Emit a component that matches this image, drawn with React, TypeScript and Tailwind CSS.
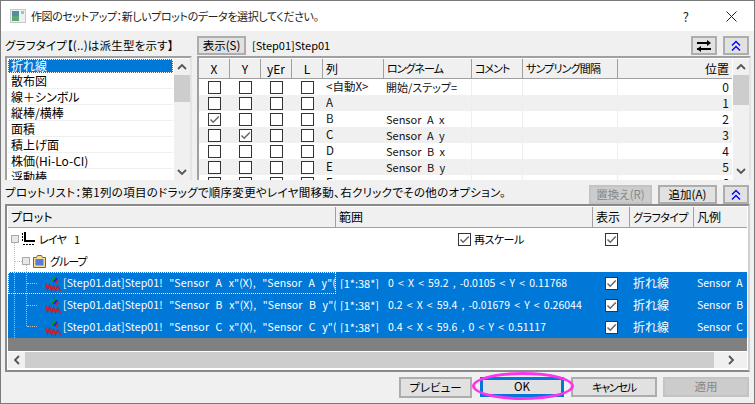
import React from "react";

const FONT = "[font-family:'Noto_Sans_CJK_JP','Noto_Sans',sans-serif] [font-feature-settings:'palt']";

function Chevron({ dir, className = "" }: { dir: "up" | "down" | "left" | "right"; className?: string }) {
  const rot = { up: 0, down: 180, left: 270, right: 90 }[dir];
  return (
    <svg width="10" height="8" viewBox="0 0 10 8" className={className} style={{ transform: `rotate(${rot}deg)` }}>
      <path d="M1 6 L5 2 L9 6" fill="none" stroke="#555" strokeWidth="1.8" />
    </svg>
  );
}

function DoubleUp() {
  return (
    <svg width="10" height="12" viewBox="0 0 10 12">
      <path d="M1 5.5 L5 1.5 L9 5.5 M1 10.5 L5 6.5 L9 10.5" fill="none" stroke="#0000ff" strokeWidth="1.4" />
    </svg>
  );
}

function Check() {
  return (
    <svg width="11" height="11" viewBox="0 0 11 11">
      <path d="M1.5 5.5 L4.2 8.2 L9.8 2.5" fill="none" stroke="#666" strokeWidth="1.5" />
    </svg>
  );
}

function Box({ checked = false }: { checked?: boolean }) {
  return (
    <div className="w-[13px] h-[13px] bg-white border border-[#333] flex items-center justify-center shrink-0">
      {checked && <Check />}
    </div>
  );
}

function Expander() {
  return <div className="w-[8px] h-[8px] border border-[#aaa] bg-[#e8e8e8] shrink-0" />;
}

function LayerIcon() {
  return (
    <svg width="14" height="14" viewBox="0 0 14 14" className="shrink-0">
      <path d="M0.5 1v8" stroke="#000" strokeWidth="1" strokeDasharray="2 1" />
      <path d="M3 0 V9 H13" fill="none" stroke="#000" strokeWidth="2" />
      <path d="M1 12.5 H13" stroke="#000" strokeWidth="1" strokeDasharray="2 1" />
    </svg>
  );
}

function GroupIcon() {
  return (
    <svg width="13" height="13" viewBox="0 0 13 13" className="shrink-0">
      <path d="M0.5 2.5 H3.5 L4.5 0.5 H8.5 L9.5 2.5 H12.5 V12.5 H0.5 Z" fill="#f4e08a" stroke="#666" />
      <rect x="2.5" y="4" width="8" height="6.5" fill="#5a78e0" />
      <path d="M2.5 4.5h8M2.5 6.5h8M2.5 8.5h8" stroke="#f05050" strokeWidth="1" strokeDasharray="1 1" />
    </svg>
  );
}

function PlotIcon() {
  return (
    <svg width="16" height="17" viewBox="0 0 16 17" className="shrink-0">
      <path d="M0.5 8 L2.5 15 L4.5 9 L6.5 16 L8.5 10 L10.5 16 L12.5 11 L15.5 16" fill="none" stroke="#e01010" strokeWidth="1.1" />
      <path d="M7 6 L10 2" stroke="#00a000" strokeWidth="2" />
      <path d="M9 7 L12 3" stroke="#2020e0" strokeWidth="2" />
      <path d="M11 8 L13 5" stroke="#d02020" strokeWidth="2" />
    </svg>
  );
}

function Btn({ children, className = "" }: { children: React.ReactNode; className?: string }) {
  return (
    <div className={`flex items-center justify-center border-2 border-[#adadad] bg-[#e1e1e1] text-[11.5px] leading-none whitespace-nowrap ${className}`}>
      {children}
    </div>
  );
}

function ScrollV({ thumb }: { thumb: string }) {
  return (
    <div className="w-[16px] h-full bg-[#f0f0f0] flex flex-col items-center shrink-0">
      <div className="h-[16px] flex items-center justify-center shrink-0"><Chevron dir="up" /></div>
      <div className={`w-full bg-[#cdcdcd] shrink-0 ${thumb}`} />
      <div className="flex-1" />
      <div className="h-[18px] flex items-center justify-center shrink-0"><Chevron dir="down" /></div>
    </div>
  );
}

const types = ["折れ線", "散布図", "線＋シンボル", "縦棒/横棒", "面積", "積上げ面", "株価(Hi-Lo-CI)", "浮動棒"];

const rows = [
  { col: "<自動X>", name: "開始/ステップ=", pos: "0" },
  { col: "A", name: "", pos: "1" },
  { col: "B", name: "Sensor A x", pos: "2", x: true },
  { col: "C", name: "Sensor A y", pos: "3", y: true },
  { col: "D", name: "Sensor B x", pos: "4" },
  { col: "E", name: "Sensor B y", pos: "5" },
  { col: "F", name: "Sensor C x", pos: "6" },
];

const GRID = "grid grid-cols-[31px_31px_31px_31px_61px_88px_51px_95px_114px]";
const PLOT = "grid grid-cols-[328px_257px_37px_64px_53px]";

const headers = [
  { t: "X", c: "justify-center" },
  { t: "Y", c: "justify-center" },
  { t: "yEr", c: "justify-center" },
  { t: "L", c: "justify-center" },
  { t: "列", c: "pl-[3px]" },
  { t: "ロングネーム", c: "pl-[3px] text-[11px] tracking-[-1px]" },
  { t: "コメント", c: "pl-[3px] text-[11px] tracking-[-1px]" },
  { t: "サンプリング間隔", c: "pl-[3px] text-[11px] tracking-[-0.8px]" },
  { t: "位置", c: "justify-end pr-[3px] border-r-0" },
];

const plotHeaders = [
  { t: "プロット", c: "" },
  { t: "範囲", c: "" },
  { t: "表示", c: "" },
  { t: "グラフタイプ", c: "text-[11px] tracking-[-0.5px]" },
  { t: "凡例", c: "border-r-0" },
];

const plots = [
  { src: `[Step01.dat]Step01! "Sensor A x"(X), "Sensor A y"(Y),`, range: "0 < X < 59.2 , -0.0105 < Y < 0.11768", legend: "Sensor A", focus: true },
  { src: `[Step01.dat]Step01! "Sensor B x"(X), "Sensor B y"(Y),`, range: "0.2 < X < 59.4 , -0.01679 < Y < 0.26044", legend: "Sensor B" },
  { src: `[Step01.dat]Step01! "Sensor C x"(X), "Sensor C y"(Y),`, range: "0.4 < X < 59.6 , 0 < Y < 0.51117", legend: "Sensor C" },
];

export default function App() {
  return (
    <div className={`w-[755px] h-[404px] border border-[#7a7a7a] bg-[#f0f0f0] text-[12px] leading-none text-black flex flex-col overflow-hidden ${FONT}`}>
      {/* title bar */}
      <div className="h-[30px] bg-white flex items-center shrink-0">
        <svg width="16" height="14" viewBox="0 0 16 14" className="ml-[9px] shrink-0">
          <rect x="0.5" y="0.5" width="15" height="13" fill="#eef0ee" stroke="#c8c8c8" />
          <rect x="2" y="2" width="7" height="10" fill="#4f8f9f" />
          <rect x="2" y="7" width="7" height="5" fill="#5aa878" />
          <rect x="11" y="2" width="3" height="3" fill="#9fc4c0" />
        </svg>
        <span className="ml-[5px] text-[#222] text-[11px] tracking-[-0.4px] whitespace-nowrap">作図のセットアップ：新しいプロットのデータを選択してください。</span>
        <span className="ml-auto text-[13px] text-[#222]">?</span>
        <svg width="11" height="11" viewBox="0 0 11 11" className="ml-[37px] mr-[17px] shrink-0">
          <path d="M0.5 0.5 L10.5 10.5 M10.5 0.5 L0.5 10.5" stroke="#222" strokeWidth="1" />
        </svg>
      </div>

      {/* toolbar */}
      <div className="h-[25px] shrink-0 flex items-start pt-[5px] pl-[4px] pr-[5px]">
        <div className="w-[192px] pt-[1px] text-[11.5px] tracking-[0.2px] leading-[16px] whitespace-nowrap">グラフタイプ【(..)は派生型を示す】</div>
        <Btn className="w-[49px] h-[19px]">表示(S)</Btn>
        <span className="ml-[6px] leading-[18px] text-[11px]">[Step01]Step01</span>
        <Btn className="ml-auto w-[26px] h-[19px]">
          <svg width="16" height="14" viewBox="0 0 16 14">
            <path d="M1 4 H11 M1 10 H15" stroke="#000" strokeWidth="2" fill="none" />
            <path d="M11 1 L15 4 L11 7 Z M5 7 L1 10 L5 13 Z" fill="#000" />
          </svg>
        </Btn>
        <Btn className="ml-[6px] w-[26px] h-[19px]"><DoubleUp /></Btn>
      </div>

      {/* upper panels */}
      <div className="h-[124px] shrink-0 flex pl-[4px] pr-[3px] gap-[5px]">
        <div className="w-[187px] h-full border-2 border-b-0 border-[#a0a0a0] border-r-[#e4e4e4] bg-white flex pt-[1px] pl-[1px]">
          <div className="flex-1 overflow-hidden">
            {types.map((t, i) => (
              <div
                key={t}
                className={`flex items-center pl-[3px] text-[12px] whitespace-nowrap ${i === 0 ? "h-[14px] bg-[#0078d7] text-white outline-1 outline-dotted outline-white -outline-offset-1" : "h-[16px] border-b border-[#f0f0f0]"}`}
              >
                {t}
              </div>
            ))}
          </div>
          <div className="ml-[1px] h-[122px]"><ScrollV thumb="h-[27px]" /></div>
        </div>

        <div className="flex-1 h-full border-2 border-b-0 border-[#a0a0a0] border-r-[#e4e4e4] bg-white flex overflow-hidden">
          <div className="w-[533px] overflow-hidden pt-[1px]">
            <div className={`${GRID} h-[20px] bg-[#f0f0f0] border-b border-[#a0a0a0]`}>
              {headers.map((h) => (
                <div key={h.t} className={`flex items-center border-r border-[#a0a0a0] whitespace-nowrap overflow-hidden ${h.c}`}>
                  {h.t}
                </div>
              ))}
            </div>
            {rows.map((r, i) => (
              <div key={r.col} className={`${GRID} h-[16px] ${i % 2 ? "bg-[#f0f0f0]" : "bg-white"}`}>
                {[r.x, r.y, false, false].map((c, j) => (
                  <div key={j} className="flex items-center justify-center"><Box checked={!!c} /></div>
                ))}
                <div className="flex items-center pl-[3px] text-[#111] text-[11.5px] whitespace-nowrap">{r.col}</div>
                <div className="flex items-center pl-[2px] text-[#111] text-[11px] [word-spacing:3px] whitespace-nowrap border-r border-[#eeeeee]">{r.name}</div>
                <div className="border-r border-[#eeeeee]" />
                <div className="border-r border-[#eeeeee]" />
                <div className="flex items-center justify-end pr-[3px] text-[#111]">{r.pos}</div>
              </div>
            ))}
          </div>
          <div className="ml-[1px] h-[122px] pt-[1px]"><ScrollV thumb="h-[30px]" /></div>
        </div>
      </div>

      {/* status row */}
      <div className="h-[24px] shrink-0 flex items-start pl-[4px] pr-[5px] pt-[5px]">
        <span className="text-[11.5px] tracking-[0.3px] leading-[14px] whitespace-nowrap">プロットリスト：第1列の項目のドラッグで順序変更やレイヤ間移動、右クリックでその他のオプション。</span>
        <Btn className="ml-auto w-[63px] h-[19px] !bg-[#cccccc] !border-[#c4c4c4] text-[#888] shrink-0">置換え(R)</Btn>
        <Btn className="ml-[6px] w-[59px] h-[19px] shrink-0">追加(A)</Btn>
        <Btn className="ml-[6px] w-[26px] h-[19px] shrink-0"><DoubleUp /></Btn>
      </div>

      {/* plot list */}
      <div className="mx-[4px] h-[168px] shrink-0 border-2 border-[#8a8a8a] border-r-[#d0d0d0] border-b-[#8a8a8a] bg-white p-[1px] flex flex-col">
        <div className={`${PLOT} h-[21px] bg-[#f0f0f0] border-b border-[#a0a0a0] shrink-0`}>
          {plotHeaders.map((h) => (
            <div key={h.t} className={`flex items-center pl-[3px] whitespace-nowrap overflow-hidden border-r border-[#a0a0a0] ${h.c}`}>{h.t}</div>
          ))}
        </div>

        <div className="relative flex-1 flex flex-col min-h-0">
          <div className={`${PLOT} h-[22px] shrink-0`}>
            <div className="flex items-center pl-[3px] gap-[3px]">
              <Expander />
              <LayerIcon />
              <span className="text-[11px] tracking-[-0.7px] [word-spacing:6px]">レイヤ 1</span>
            </div>
            <div className="flex items-center pl-[122px] gap-[3px]">
              <Box checked />
              <span className="text-[11px] tracking-[-0.5px]">再スケール</span>
            </div>
            <div className="flex items-center pl-[12px]"><Box checked /></div>
            <div />
            <div />
          </div>
          <div className="h-[22px] shrink-0 flex items-center pl-[14px] gap-[3px]">
            <Expander />
            <GroupIcon />
            <span className="ml-[1px] text-[11px] tracking-[-1px]">グループ</span>
          </div>

          <div className="bg-[#0078d7] text-white shrink-0">
            {plots.map((p) => (
              <div key={p.legend} className={`${PLOT} h-[22px]`}>
                <div className={`flex items-center pl-[37px] gap-[2px] overflow-hidden whitespace-nowrap ${p.focus ? "outline-1 outline-dotted outline-white -outline-offset-1" : ""}`}>
                  <PlotIcon />
                  <span className="text-[10.5px] [word-spacing:4px] tracking-[0.15px]">{p.src}</span>
                </div>
                <div className="flex items-center pl-[4px] overflow-hidden whitespace-nowrap">
                  <span className="w-[40px] shrink-0 overflow-hidden text-[11px]">[1*:38*]</span>
                  <span className="ml-[8px] text-[10.5px] [word-spacing:1.8px]">{p.range}</span>
                </div>
                <div className="flex items-center pl-[12px]"><Box checked /></div>
                <div className="flex items-center pl-[3px] text-[12px]">折れ線</div>
                <div className="flex items-center pl-[3px] overflow-hidden whitespace-nowrap text-[10.5px] [word-spacing:3px]">{p.legend}</div>
              </div>
            ))}
          </div>

          <div className="h-[13px] bg-[#808080] shrink-0" />
          <div className="h-[1px] bg-white shrink-0" />
          <div className="h-[16px] bg-[#f0f0f0] flex items-center shrink-0">
            <div className="w-[17px] flex justify-center shrink-0"><Chevron dir="left" /></div>
            <div className="flex-1 h-full bg-[#cdcdcd]" />
            <div className="w-[33px] flex justify-center shrink-0"><Chevron dir="right" /></div>
          </div>

          {/* tree guide lines drawn over the rows */}
          <div className="absolute left-[6px] top-[15px] h-[95px] border-l border-dotted border-[#c0c0c0]" />
          <div className="absolute left-[7px] top-[33px] w-[7px] border-t border-dotted border-[#c0c0c0]" />
          <div className="absolute left-[18px] top-[37px] h-[61px] border-l border-dotted border-[#c0c0c0]" />
          <div className="absolute left-[19px] top-[55px] w-[10px] border-t border-dotted border-[#c0c0c0]" />
          <div className="absolute left-[19px] top-[77px] w-[10px] border-t border-dotted border-[#c0c0c0]" />
          <div className="absolute left-[19px] top-[98px] w-[10px] border-t border-dotted border-[#c0c0c0]" />
        </div>
      </div>

      {/* dialog buttons */}
      <div className="relative flex-1 flex items-start pt-[5px] pr-[5px] justify-end">
        <Btn className="w-[73px] h-[21px] mr-[8px]">プレビュー</Btn>
        <Btn className="w-[84px] h-[20px] !border-[#0078d7] !border-[3px]">OK</Btn>
        <Btn className="w-[86px] h-[20px] ml-[7px] !text-[11px] tracking-[-1.2px]">キャンセル</Btn>
        <Btn className="w-[86px] h-[20px] ml-[6px] !bg-[#cccccc] !border-[#c4c4c4] text-[#888]">適用</Btn>
        <div className="absolute left-[471px] top-[0px] w-[102px] h-[28px] rounded-[50%] border-[3px] border-[#ff33ee] pointer-events-none" />
      </div>
    </div>
  );
}
